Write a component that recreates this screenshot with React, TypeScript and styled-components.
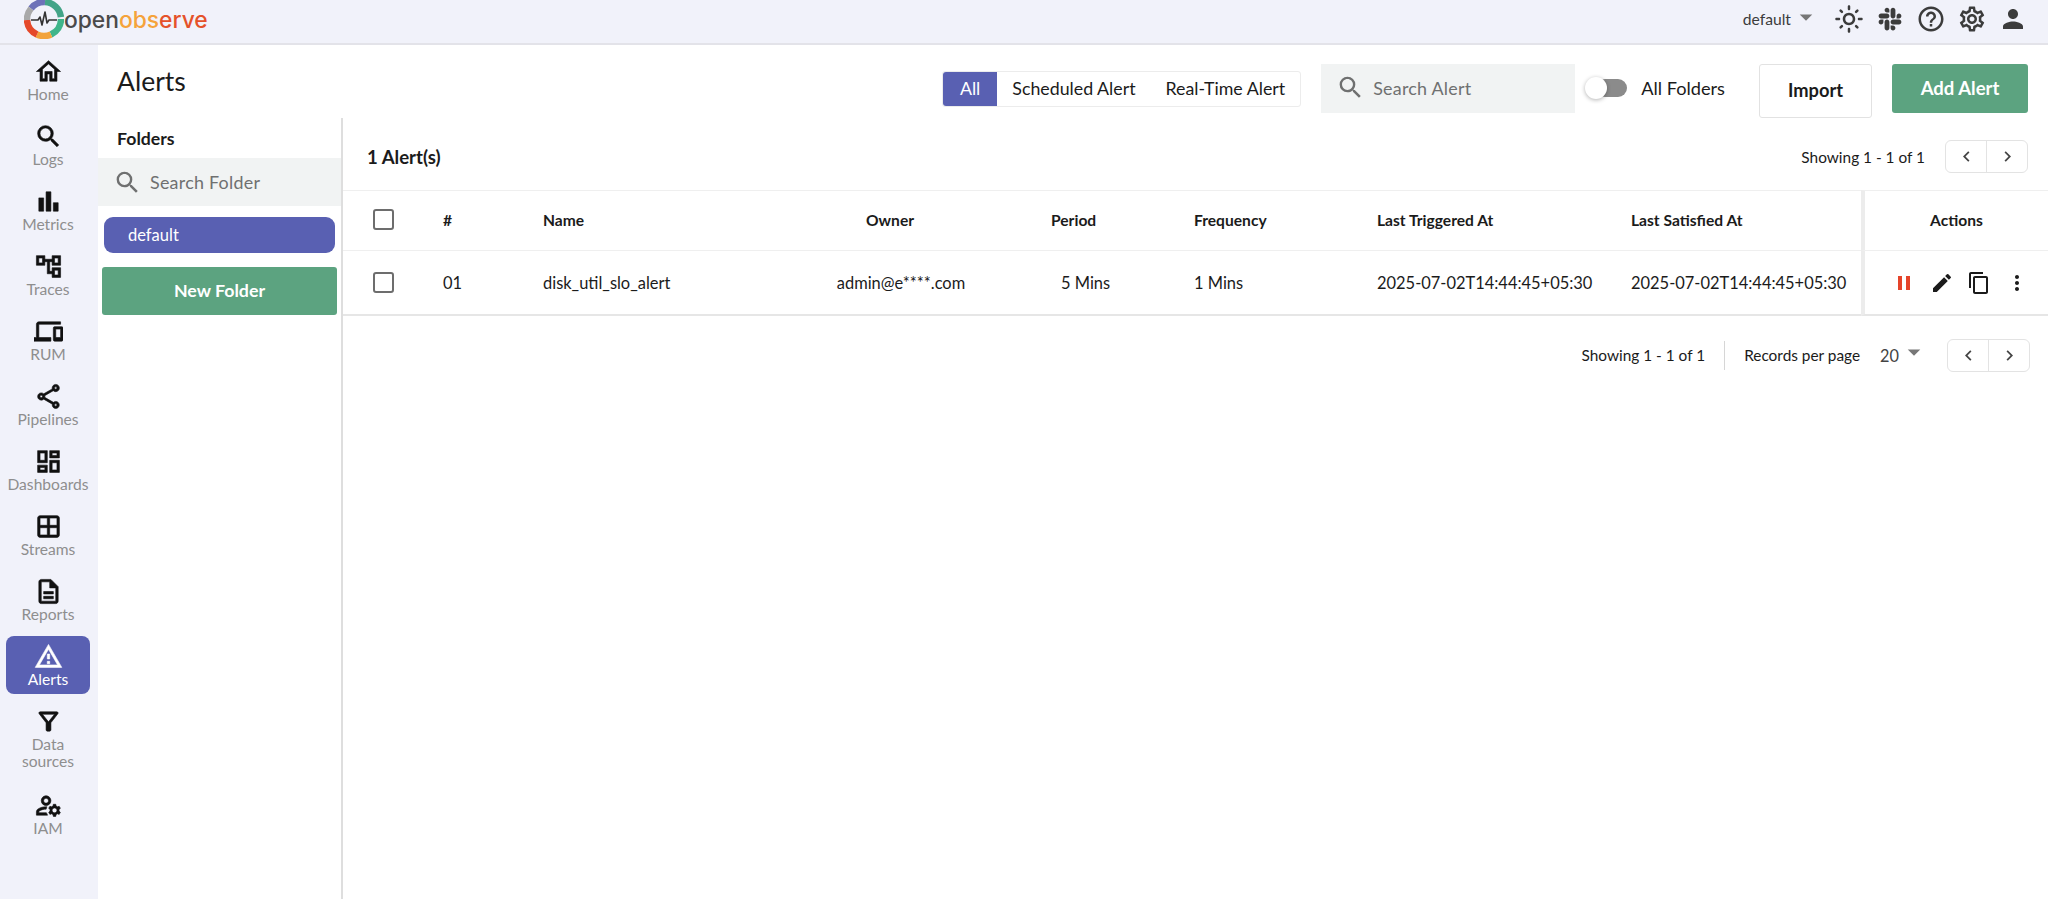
import React from 'react';
import styled, { createGlobalStyle } from 'styled-components';
import {
  MdOutlineHome,
  MdSearch,
  MdBarChart,
  MdOutlineAccountTree,
  MdOutlineDevices,
  MdOutlineShare,
  MdOutlineDashboard,
  MdOutlineWindow,
  MdOutlineDescription,
  MdOutlineWarningAmber,
  MdOutlineFilterAlt,
  MdOutlineManageAccounts,
  MdOutlineLightMode,
  MdHelpOutline,
  MdOutlineSettings,
  MdPerson,
  MdPause,
  MdEdit,
  MdContentCopy,
  MdMoreVert,
  MdChevronLeft,
  MdChevronRight,
  MdArrowDropDown,
} from 'react-icons/md';
import { FaSlack } from 'react-icons/fa';

const colors = {
  rail: '#f1f2fa',
  primary: '#5960b2',
  green: '#5ca380',
  field: '#f1f3f3',
  line: '#e4e4e4',
  text: '#1b1b1b',
  muted: '#8e8e8e',
};

const GlobalStyle = createGlobalStyle`
  html, body {
    margin: 0;
    padding: 0;
    background: #fff;
    font-family: "Lato", "Noto Sans", sans-serif;
    color: ${colors.text};
  }
  * { box-sizing: border-box; }
`;

const Page = styled.div`
  width: 2048px;
  height: 899px;
  display: flex;
  flex-direction: column;
  overflow: hidden;
`;

const Header = styled.header`
  height: 45px;
  flex: none;
  background: ${colors.rail};
  border-bottom: 2px solid #e3e3e9;
  display: flex;
  align-items: center;
  justify-content: space-between;
  padding: 0 15px 5px 24px;
`;

const Logo = styled.div`
  display: flex;
  align-items: center;
`;

const LogoText = styled.span`
  font-family: "Inter", sans-serif;
  font-size: 22.8px;
  font-weight: 500;
  color: #4a4a4a;
`;

const LogoPart = styled.span<{ $tone: string }>`
  color: ${(p) => p.$tone};
`;

const HeaderTools = styled.div`
  display: flex;
  align-items: center;
  color: #3c3c3c;
`;

const OrgName = styled.span`
  font-size: 15.7px;
`;

const OrgCaret = styled.span`
  display: flex;
  width: 30px;
  justify-content: center;
  margin: -5px 7px 0 0;
  font-size: 30px;
  color: #777;
`;

const HeaderIcon = styled.span`
  display: flex;
  width: 41px;
  justify-content: center;
  font-size: 30px;
`;

const Body = styled.div`
  flex: 1;
  display: flex;
  min-height: 0;
`;

const Sidebar = styled.nav`
  width: 98px;
  flex: none;
  background: ${colors.rail};
  padding: 6px 8px 0 6px;
  display: flex;
  flex-direction: column;
  gap: 7px;
`;

const NavItem = styled.div<{ $active?: boolean }>`
  min-height: 58px;
  border-radius: 8px;
  display: flex;
  flex-direction: column;
  align-items: center;
  padding: 6px 0;
  background: ${(p) => (p.$active ? colors.primary : 'transparent')};
  color: ${(p) => (p.$active ? '#fff' : '#111')};
  font-size: 29px;
  &:nth-child(11) { margin-bottom: 2px; }
  svg { display: block; }
  svg path:not([fill='none']) {
    stroke: currentColor;
    stroke-width: 0.5;
  }
`;

const NavLabel = styled.span<{ $active?: boolean }>`
  font-size: 15.6px;
  line-height: 17px;
  text-align: center;
  width: 84px;
  color: ${(p) => (p.$active ? '#fff' : colors.muted)};
`;

const Main = styled.main`
  flex: 1;
  display: flex;
  flex-direction: column;
  min-width: 0;
`;

const TitleBar = styled.div`
  height: 73px;
  flex: none;
  display: flex;
  align-items: flex-start;
  justify-content: space-between;
  padding: 19px 20px 0 19px;
`;

const PageTitle = styled.h1`
  margin: 0;
  font-size: 26.5px;
  line-height: 34px;
  font-weight: 400;
`;

const Controls = styled.div`
  display: flex;
  align-items: flex-start;
`;

const Tabs = styled.div`
  height: 36px;
  margin-top: 7px;
  display: flex;
  border: 1px solid #ececec;
  border-radius: 3px;
  font-size: 17.8px;
`;

const Tab = styled.div<{ $active?: boolean }>`
  display: flex;
  align-items: center;
  padding: 0 ${(p) => (p.$active ? 17 : 15)}px 2px;
  background: ${(p) => (p.$active ? colors.primary : 'transparent')};
  color: ${(p) => (p.$active ? '#fff' : colors.text)};
  border-radius: 3px 0 0 3px;
`;

const SearchField = styled.div<{ $width: string; $height: number }>`
  width: ${(p) => p.$width};
  height: ${(p) => p.$height}px;
  background: ${colors.field};
  display: flex;
  align-items: center;
  gap: 8px;
  padding-left: 15px;
  color: #6f7070;
  font-size: 17.9px;
  letter-spacing: 0.25px;
  svg { font-size: 29px; flex: none; }
`;

const AlertSearch = styled(SearchField)`
  margin-left: 20px;
  padding-bottom: 2px;
`;

const ToggleWrap = styled.div`
  height: 49px;
  display: flex;
  align-items: center;
  margin-left: 11px;
  padding-bottom: 2px;
  font-size: 18.2px;
`;

const ToggleTrack = styled.div`
  position: relative;
  width: 31px;
  height: 18px;
  margin-left: 10px;
  border-radius: 9px;
  background: #8b8b8b;
  margin-right: 14px;
`;

const ToggleThumb = styled.div`
  position: absolute;
  left: -11px;
  top: -2px;
  width: 22px;
  height: 22px;
  border-radius: 50%;
  background: #fff;
  box-shadow: 0 1px 4px rgba(0, 0, 0, 0.3);
`;

const ImportButton = styled.div`
  width: 113px;
  height: 54px;
  margin-left: 34px;
  border: 1px solid #e2e2e2;
  border-radius: 3px;
  display: flex;
  align-items: center;
  justify-content: center;
  padding-bottom: 2px;
  font-size: 18.3px;
  font-weight: 700;
`;

const AddButton = styled.div`
  width: 136px;
  height: 49px;
  margin-left: 20px;
  background: ${colors.green};
  color: #fff;
  border-radius: 3px;
  display: flex;
  align-items: center;
  justify-content: center;
  padding-bottom: 2px;
  font-size: 18.5px;
  font-weight: 700;
`;

const Workspace = styled.div`
  flex: 1;
  display: flex;
  min-height: 0;
`;

const FolderPanel = styled.aside`
  width: 245px;
  flex: none;
  border-right: 2px solid #dedede;
`;

const FolderTitle = styled.div`
  height: 40px;
  padding: 10px 0 0 19px;
  font-size: 17.7px;
  font-weight: 700;
`;

const FolderPill = styled.div`
  height: 36px;
  margin: 11px 6px 0 6px;
  border-radius: 9px;
  background: ${colors.primary};
  color: #fff;
  display: flex;
  align-items: center;
  padding-left: 24px;
  font-size: 16.5px;
`;

const NewFolderButton = styled.div`
  height: 48px;
  margin: 14px 4px 0 4px;
  border-radius: 3px;
  background: ${colors.green};
  color: #fff;
  display: flex;
  align-items: center;
  justify-content: center;
  font-size: 17.8px;
  font-weight: 700;
  padding-bottom: 2px;
`;

const TablePanel = styled.section`
  flex: 1;
  min-width: 0;
`;

const SummaryBar = styled.div`
  height: 72px;
  display: flex;
  align-items: center;
  justify-content: space-between;
  padding: 5px 20px 0 24px;
`;

const AlertCount = styled.span`
  font-size: 18.6px;
  font-weight: 700;
`;

const PagerGroup = styled.div`
  display: flex;
  align-items: center;
  font-size: 15.4px;
`;

const Pager = styled.div`
  width: 83px;
  height: 33px;
  margin-left: 20px;
  border: 1px solid #e3e3e3;
  border-radius: 6px;
  display: flex;
  color: #444;
`;

const PagerCell = styled.div`
  flex: 1;
  display: flex;
  align-items: center;
  justify-content: center;
  font-size: 21px;
  & + & { border-left: 1px solid #e3e3e3; }
`;

const TableGrid = styled.div`
  display: grid;
  grid-template-columns: 100px 100px 237px 220px 194px 183px 254px 230px 1fr;
`;

const Cell = styled.div<{ $row?: boolean; $center?: boolean; $pad?: number; $head?: boolean }>`
  display: flex;
  align-items: center;
  justify-content: ${(p) => (p.$center ? 'center' : 'flex-start')};
  height: ${(p) => (p.$row ? 66 : 60)}px;
  padding-left: ${(p) => p.$pad ?? 0}px;
  padding-bottom: ${(p) => (p.$head ? 2 : 0)}px;
  border-top: 1px solid #efefef;
  border-bottom: ${(p) => (p.$row ? '2px solid #e6e6e6' : 'none')};
  font-size: ${(p) => (p.$head ? 15.6 : 16.45)}px;
  font-weight: ${(p) => (p.$head ? 700 : 400)};
  white-space: nowrap;
`;

const ActionsCell = styled(Cell)`
  border-left: 4px solid #ececec;
`;

const ActionsRow = styled(ActionsCell)`
  font-size: 24px;
  padding-left: 27px;
  gap: 13.5px;
`;

const PauseIcon = styled(MdPause)`
  color: #e5442a;
`;

const CheckBox = styled.span`
  display: block;
  width: 21px;
  height: 21px;
  margin-left: 1px;
  border: 2px solid #6d6d6d;
  border-radius: 3px;
`;

const Footer = styled.div`
  height: 78px;
  display: flex;
  align-items: center;
  justify-content: flex-end;
  padding-right: 18px;
  font-size: 15.4px;
`;

const FooterDivider = styled.span`
  width: 1px;
  height: 29px;
  background: #d6d6d6;
  margin: 0 19px;
`;

const PageSize = styled.span`
  margin-left: 20px;
  display: flex;
  align-items: center;
  color: #444;
  font-size: 16.3px;
  svg { font-size: 30px; color: #777; margin: -6px -2px 0 0; }
`;

const navItems = [
  { label: 'Home', icon: <MdOutlineHome /> },
  { label: 'Logs', icon: <MdSearch /> },
  { label: 'Metrics', icon: <MdBarChart /> },
  { label: 'Traces', icon: <MdOutlineAccountTree /> },
  { label: 'RUM', icon: <MdOutlineDevices /> },
  { label: 'Pipelines', icon: <MdOutlineShare /> },
  { label: 'Dashboards', icon: <MdOutlineDashboard /> },
  { label: 'Streams', icon: <MdOutlineWindow /> },
  { label: 'Reports', icon: <MdOutlineDescription /> },
  { label: 'Alerts', icon: <MdOutlineWarningAmber />, active: true },
  { label: 'Data sources', icon: <MdOutlineFilterAlt /> },
  { label: 'IAM', icon: <MdOutlineManageAccounts /> },
];

function LogoMark() {
  return (
    <svg width="40" height="40" viewBox="0 0 40 40" fill="none">
      <g strokeWidth="6.5">
        <path d="M7 9.5A17 17 0 0 1 21 3" stroke="#6d72b8" />
        <path d="M21 3A17 17 0 0 1 36.9 18" stroke="#43a487" />
        <path d="M37 20A17 17 0 0 1 27 35.5" stroke="#3fb58a" />
        <path d="M27 35.5A17 17 0 0 1 13 35.5" stroke="#f2a33c" />
        <path d="M13 35.5A17 17 0 0 1 3 21" stroke="#e5492a" />
        <path d="M3 21A17 17 0 0 1 7 9.5" stroke="#a9a9a9" />
      </g>
      <path
        d="M7 21h7l2-3 2 8 3-13 2 11 2-3h8"
        stroke="#333"
        strokeWidth="1.6"
        strokeLinejoin="round"
      />
    </svg>
  );
}

function App() {
  return (
    <Page>
      <GlobalStyle />
      <Header>
        <Logo>
          <LogoMark />
          <LogoText>
            open
            <LogoPart $tone="#f5a33b">obs</LogoPart>
            <LogoPart $tone="#e5522a">erve</LogoPart>
          </LogoText>
        </Logo>
        <HeaderTools>
          <OrgName>default</OrgName>
          <OrgCaret>
            <MdArrowDropDown />
          </OrgCaret>
          <HeaderIcon>
            <MdOutlineLightMode />
          </HeaderIcon>
          <HeaderIcon>
            <FaSlack size={26} />
          </HeaderIcon>
          <HeaderIcon>
            <MdHelpOutline />
          </HeaderIcon>
          <HeaderIcon>
            <MdOutlineSettings />
          </HeaderIcon>
          <HeaderIcon>
            <MdPerson />
          </HeaderIcon>
        </HeaderTools>
      </Header>
      <Body>
        <Sidebar>
          {navItems.map((item) => (
            <NavItem key={item.label} $active={item.active}>
              {item.icon}
              <NavLabel $active={item.active}>{item.label}</NavLabel>
            </NavItem>
          ))}
        </Sidebar>
        <Main>
          <TitleBar>
            <PageTitle>Alerts</PageTitle>
            <Controls>
              <Tabs>
                <Tab $active>All</Tab>
                <Tab>Scheduled Alert</Tab>
                <Tab>Real-Time Alert</Tab>
              </Tabs>
              <AlertSearch $width="254px" $height={49}>
                <MdSearch />
                Search Alert
              </AlertSearch>
              <ToggleWrap>
                <ToggleTrack>
                  <ToggleThumb />
                </ToggleTrack>
                All Folders
              </ToggleWrap>
              <ImportButton>Import</ImportButton>
              <AddButton>Add Alert</AddButton>
            </Controls>
          </TitleBar>
          <Workspace>
            <FolderPanel>
              <FolderTitle>Folders</FolderTitle>
              <SearchField $width="100%" $height={48}>
                <MdSearch />
                Search Folder
              </SearchField>
              <FolderPill>default</FolderPill>
              <NewFolderButton>New Folder</NewFolderButton>
            </FolderPanel>
            <TablePanel>
              <SummaryBar>
                <AlertCount>1 Alert(s)</AlertCount>
                <PagerGroup>
                  Showing 1 - 1 of 1
                  <Pager>
                    <PagerCell>
                      <MdChevronLeft />
                    </PagerCell>
                    <PagerCell>
                      <MdChevronRight />
                    </PagerCell>
                  </Pager>
                </PagerGroup>
              </SummaryBar>
              <TableGrid>
                <Cell $head $pad={29}>
                  <CheckBox />
                </Cell>
                <Cell $head>#</Cell>
                <Cell $head>Name</Cell>
                <Cell $head $center>
                  Owner
                </Cell>
                <Cell $head $pad={51}>
                  Period
                </Cell>
                <Cell $head>Frequency</Cell>
                <Cell $head>Last Triggered At</Cell>
                <Cell $head>Last Satisfied At</Cell>
                <ActionsCell $head $center>
                  Actions
                </ActionsCell>

                <Cell $row $pad={29}>
                  <CheckBox />
                </Cell>
                <Cell $row>01</Cell>
                <Cell $row>disk_util_slo_alert</Cell>
                <Cell $row $center $pad={22}>
                  admin@e****.com
                </Cell>
                <Cell $row $pad={61}>
                  5 Mins
                </Cell>
                <Cell $row>1 Mins</Cell>
                <Cell $row>2025-07-02T14:44:45+05:30</Cell>
                <Cell $row>2025-07-02T14:44:45+05:30</Cell>
                <ActionsRow $row>
                  <PauseIcon />
                  <MdEdit />
                  <MdContentCopy />
                  <MdMoreVert />
                </ActionsRow>
              </TableGrid>
              <Footer>
                Showing 1 - 1 of 1
                <FooterDivider />
                Records per page
                <PageSize>
                  20
                  <MdArrowDropDown />
                </PageSize>
                <Pager>
                  <PagerCell>
                    <MdChevronLeft />
                  </PagerCell>
                  <PagerCell>
                    <MdChevronRight />
                  </PagerCell>
                </Pager>
              </Footer>
            </TablePanel>
          </Workspace>
        </Main>
      </Body>
    </Page>
  );
}

export default App;
